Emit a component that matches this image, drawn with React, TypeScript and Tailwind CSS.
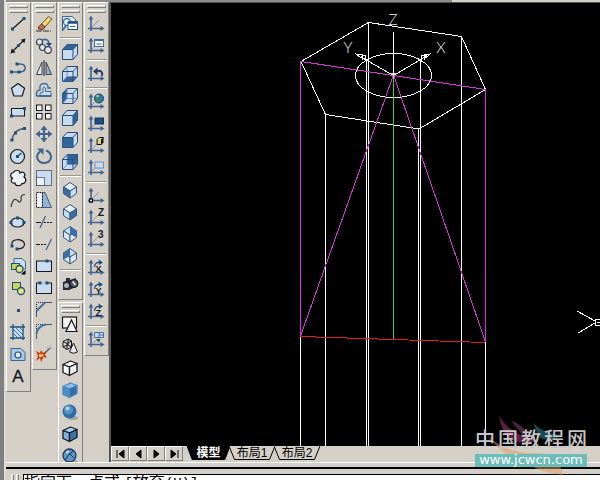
import type { ReactNode } from "react";

type Tool = { name: string; icon: ReactNode } | "sep";

const INK = "#15191f";
const NAVY = "#1d4f7c";
const STEEL = "#41638f";
const PALE = "#c9dcf0";
const MID = "#8fb3d9";
const DEEP = "#3a6ea5";

function Dot({ x, y }: { x: number; y: number }) {
  return <rect x={x - 1.5} y={y - 1.5} width="3" height="3" fill={NAVY} />;
}

function Box({ face }: { face: "top" | "bottom" | "left" | "right" | "front" | "back" }) {
  const faces = {
    top: "M3.5 8.5L8 3.5H18.5L14 8.5Z",
    bottom: "M3.5 18.5L8 13.5H18.5L14 18.5Z",
    left: "M3.5 8.5L8 3.5V13.5L3.5 18.5Z",
    right: "M14 8.5L18.5 3.5V13.5L14 18.5Z",
    front: "M3.5 8.5H14V18.5H3.5Z",
    back: "M8 3.5H18.5V13.5H8Z",
  };
  const solid = face === "front" || face === "right" || face === "top";
  return (
    <g strokeLinejoin="round">
      <path d="M3.5 8.5L8 3.5H18.5V13.5L14 18.5H3.5Z" fill="#c6dbf0" stroke="#2b4d75" />
      <path d={faces[face]} fill="#2f659c" />
      {!solid && <path d="M8 3.5V13.5H18.5M8 13.5L3.5 18.5" stroke="#6f8fb3" />}
      <path d="M3.5 8.5H14V18.5M14 8.5L18.5 3.5" stroke="#2b4d75" />
    </g>
  );
}

function IsoBox({ top, left, right }: { top: string; left: string; right: string }) {
  return (
    <g stroke="#35587f" strokeLinejoin="round">
      <path d="M11 3.5L17.5 8L11 12L4.5 8Z" fill={top} />
      <path d="M4.5 8L11 12V19L4.5 14.5Z" fill={left} />
      <path d="M17.5 8L11 12V19L17.5 14.5Z" fill={right} />
    </g>
  );
}

function Cube({ top, left, right, edge }: { top: string; left: string; right: string; edge: string }) {
  return (
    <g stroke={edge} strokeWidth="1.3" strokeLinejoin="round">
      <path d="M4 7.5L11.5 4L18 6.5L10.5 10Z" fill={top} />
      <path d="M4 7.5L10.5 10V18.5L4 15.5Z" fill={left} />
      <path d="M18 6.5L10.5 10V18.5L18 14.5Z" fill={right} />
    </g>
  );
}

function Axes({ children, plain }: { children?: ReactNode; plain?: boolean }) {
  return (
    <>
      {!plain && <path d="M6 15L14 7" stroke="#8b96a3" />}
      <path d="M6 5V18M3 15.5H17" stroke={STEEL} strokeWidth="1.6" />
      <path d="M6 2.5L8.4 6.5H3.6ZM19.5 15.5L15.5 13.1V17.9Z" fill={STEEL} />
      {children}
    </>
  );
}

function AxisTurn({ letter }: { letter: string }) {
  return (
    <Axes plain>
      <path d="M9.5 10Q10 5 15 5.5" stroke={NAVY} strokeWidth="1.3" />
      <path d="M13.5 2.5L18 5.5L14 8Z" fill={NAVY} />
      <text x="10.5" y="15" fontSize="9" fontWeight="700" fontFamily="Liberation Sans, sans-serif" fill={INK}>
        {letter}
      </text>
    </Axes>
  );
}

function AxisMark({ mark }: { mark: string }) {
  return (
    <Axes>
      <text x="13" y="9" fontSize="10" fontWeight="700" fontFamily="Liberation Sans, sans-serif" fill={INK}>
        {mark}
      </text>
    </Axes>
  );
}

const drawTools: Tool[] = [
  { name: "Line", icon: <><path d="M5.5 16L17 5.5" stroke={INK} strokeWidth="1.2" /><Dot x={5.5} y={16} /><Dot x={17} y={5.5} /></> },
  { name: "Construction line", icon: <><path d="M5 17L17.5 4.5" stroke={INK} strokeWidth="1.3" /><path d="M3.5 18.5L4.7 13.5L8.5 17.3ZM18.5 3.5L13.8 4.7L17.3 8.3Z" fill={INK} /><Dot x={11.5} y={10.5} /></> },
  { name: "Polyline", icon: <><path d="M4.5 15H12C20 15 20 7.5 13 7H10" stroke={STEEL} strokeWidth="1.6" /><Dot x={4.5} y={15} /><Dot x={12} y={15} /><Dot x={10} y={7} /></> },
  { name: "Polygon", icon: <path d="M11 4.5L17.5 9.3L15.2 17H6.8L4.5 9.3Z" fill={PALE} stroke={INK} strokeWidth="1.2" /> },
  { name: "Rectangle", icon: <><rect x="4.5" y="7.5" width="13" height="7.5" fill={PALE} stroke={INK} /><Dot x={4.5} y={15} /><Dot x={17.5} y={7.5} /></> },
  { name: "Arc", icon: <><path d="M5 17Q7 6 18 5.5" stroke="#4d5660" strokeWidth="1.4" /><Dot x={5} y={17} /><Dot x={8.5} y={10} /><Dot x={17.5} y={5.5} /></> },
  { name: "Circle", icon: <><circle cx="10.5" cy="11.5" r="7" fill={PALE} stroke={INK} strokeWidth="1.2" /><path d="M10.5 11.5L14.5 8" stroke={NAVY} strokeWidth="1.5" /><Dot x={10.5} y={11.5} /></> },
  { name: "Revision cloud", icon: <path d="M6 11C3 11 2.5 6 6.5 5.5C7.5 2.5 13 3 13 6C16 3.5 19.5 7 17 10C20 12 19 17 15 16.5C13.5 20 8 19 8 16C4 17 3 12.5 6 11Z" fill="#eef1f4" stroke={INK} strokeWidth="1.2" /> },
  { name: "Spline", icon: <path d="M4 18C6 8 9 10 11 12C13 15 15 11 14 9Q14 5.5 18 5.5" stroke="#343a42" strokeWidth="1.2" /> },
  { name: "Ellipse", icon: <><ellipse cx="10.5" cy="11.5" rx="6.5" ry="4.5" fill={PALE} stroke={INK} strokeWidth="1.2" /><Dot x={4} y={11.5} /><Dot x={17} y={11.5} /><Dot x={10.5} y={7} /></> },
  { name: "Ellipse arc", icon: <><path d="M5 13C2 5 17 5 17.5 11C17.5 15 13 16 10 16" stroke={INK} strokeWidth="1.2" /><Dot x={5} y={13} /><Dot x={10} y={16} /></> },
  { name: "Insert block", icon: <><path d="M7 3.5H15L18.5 7V14H7Z" fill={PALE} stroke={STEEL} /><rect x="4.5" y="8.5" width="8" height="6" fill="#c8d45c" stroke={NAVY} /><circle cx="12.5" cy="14" r="3.5" fill="#e3e673" stroke={NAVY} strokeWidth="1.3" /><path d="M18.5 15V19.5H14Z" fill="#000" /></> },
  { name: "Make block", icon: <><rect x="5.5" y="5.5" width="8" height="7" fill="#c8d45c" stroke={NAVY} /><circle cx="14" cy="14" r="3.5" fill="#e3e673" stroke={NAVY} strokeWidth="1.3" /></> },
  { name: "Point", icon: <Dot x={11.5} y={11.5} /> },
  { name: "Hatch", icon: <><path d="M6 6H16V17H6Z" fill={PALE} /><path d="M6 3V19M3 17H18M16 3V19M3 6H18" stroke={NAVY} strokeWidth="1.3" /><path d="M6 12L11 17M6 8L15 17M8 6L16 14M12 6L16 10" stroke={DEEP} /></> },
  { name: "Region", icon: <><path d="M4 5.5H14L18 9.5V17.5H4Z" fill="#aac8e6" stroke={STEEL} /><circle cx="11" cy="12" r="3" fill="#e9eef4" stroke={NAVY} strokeWidth="1.2" /></> },
  { name: "Text", icon: <text x="11" y="17" textAnchor="middle" fontSize="17" fontFamily="Liberation Sans, sans-serif" fill={INK} stroke={INK} strokeWidth="0.3">A</text> },
];

const modifyTools: Tool[] = [
  { name: "Erase", icon: <><path d="M3 18H18" stroke="#333" strokeDasharray="6 1" /><path d="M8.5 11L15.5 3.5L19 6L12 14Z" fill="#ecd262" stroke="#6b5a22" /><path d="M8.5 11L12 14L10 16.5L5.5 16V14Z" fill="#d0705f" stroke="#5c2b25" /><path d="M10 12L16.5 5" stroke="#fbf0bb" /></> },
  { name: "Copy", icon: <><g fill="#e4e7ea" stroke="#38414c" strokeWidth="1.2"><circle cx="6.5" cy="7" r="3" /><circle cx="9.5" cy="12.5" r="3" /><circle cx="15" cy="15" r="3.3" /></g><path d="M9 5Q15 3 16 8" stroke={DEEP} strokeWidth="1.7" /><path d="M13 8H19L16 11.5Z" fill={NAVY} /></> },
  { name: "Mirror", icon: <><path d="M9 5V17.5H3.5Z" fill="#e4e7ea" stroke="#38414c" /><path d="M13 5V17.5H18.5Z" fill={MID} stroke="#38414c" /><path d="M11 3V19" stroke={INK} /></> },
  { name: "Offset", icon: <><path d="M3.5 17V14Q4 11 7 11Q6 4.5 11 4.5Q15.5 4.5 15 9H18" stroke={DEEP} strokeWidth="1.4" /><path d="M7 17V14.5Q7.500 13.500 10 13.5V9Q11 7 12.5 9V12.5H18V17Z" fill={PALE} stroke={DEEP} /><path d="M3.5 17H18.5" stroke={NAVY} strokeWidth="1.3" /></> },
  { name: "Array", icon: <g fill="#f2f2f2" stroke={INK}><rect x="3.5" y="4" width="5.5" height="5.5" /><rect x="12.5" y="4" width="5.5" height="5.5" /><rect x="3.5" y="12.5" width="5.5" height="5.5" /><rect x="12.5" y="12.5" width="5.5" height="5.5" /></g> },
  { name: "Move", icon: <><path d="M11 5V17M5 11H17" stroke={STEEL} strokeWidth="2.2" /><path d="M11 2.5L14.5 7H7.5ZM11 19.5L14.5 15H7.5ZM2.5 11L7 7.500V14.500ZM19.5 11L15 7.5V14.5Z" fill={STEEL} /></> },
  { name: "Rotate", icon: <><path d="M7 6.5Q3 10 4.5 14Q7 18.5 12 18Q18 17 18 11.5Q17.5 7 13 5.5" stroke={STEEL} strokeWidth="2" /><path d="M4 3.5H10.5V10Z" fill={STEEL} /></> },
  { name: "Scale", icon: <><rect x="3.5" y="3.5" width="15" height="15" fill={PALE} stroke="#5b7290" /><path d="M3.5 10.5H11.5V18.5H3.5Z" fill="#eaf1f8" stroke={INK} strokeDasharray="1 1" /></> },
  { name: "Stretch", icon: <><path d="M9.5 3.5H12L18.5 18.5H9.5Z" fill={MID} stroke="#4c5c70" /><rect x="3.5" y="3.5" width="6" height="15" fill="#f0f2f4" stroke={INK} strokeDasharray="2 1" /></> },
  { name: "Trim", icon: <><path d="M3 11.5H8" stroke={INK} /><path d="M11 11.5H19" stroke={INK} strokeDasharray="2 1" /><path d="M7 17L12.5 5" stroke={STEEL} strokeWidth="1.3" /></> },
  { name: "Extend", icon: <><path d="M3 11.5H7" stroke={INK} /><path d="M8 11.5H14" stroke={INK} strokeDasharray="2 1" /><path d="M13 17L18.5 6" stroke={STEEL} strokeWidth="1.3" /></> },
  { name: "Break at point", icon: <><rect x="3.5" y="6" width="15" height="10.5" fill={PALE} stroke={INK} /><Dot x={14} y={6} /></> },
  { name: "Break", icon: <><rect x="3.5" y="6" width="15" height="10.5" fill={PALE} stroke={INK} /><path d="M7 6H14" stroke={PALE} strokeWidth="1.5" /><Dot x={7} y={6} /><Dot x={14} y={6} /></> },
  { name: "Chamfer", icon: <><path d="M3.5 18V3.5H19" stroke={INK} strokeDasharray="1 1" /><path d="M3.5 18V12M12 3.5H19" stroke="#4d5660" /><path d="M3.5 12L12 3.5" stroke={DEEP} strokeWidth="1.8" /></> },
  { name: "Fillet", icon: <><path d="M3.5 18V3.5H19" stroke={INK} strokeDasharray="1 1" /><path d="M3.5 18V13M13 3.5H19" stroke="#4d5660" /><path d="M3.5 13Q4.5 5 13 3.5" stroke={DEEP} strokeWidth="1.8" /></> },
  { name: "Explode", icon: <><path d="M11 11L17 5" stroke="#5d6b7a" strokeWidth="1.5" /><path d="M17 2V8M14 5H20" stroke="#8c99a6" strokeDasharray="1 1" /><path d="M3 8L7 10L8 7L10 10L13 8L12 12L14 15L10.5 14L8 19L7 15L3 18L5 13Z" fill="#c93a20" /><path d="M6 11H9L11 12L9 14H6Z" fill="#f6c443" /></> },
];

const viewTools: Tool[] = [
  { name: "Named views", icon: <><path d="M3.5 18V3.5H13L17 7V9" fill="#e9f0f8" stroke={STEEL} /><circle cx="8" cy="9" r="3.5" stroke={DEEP} strokeWidth="1.3" /><path d="M4 17L7 12.5" stroke={DEEP} strokeWidth="2" /><rect x="9" y="9" width="9.5" height="7.5" fill="#fff" stroke={NAVY} /><path d="M9 9.5H18.5" stroke={NAVY} strokeWidth="2.5" /><path d="M11 13.5H16.5" stroke={STEEL} /></> },
  "sep",
  { name: "Top view", icon: <Box face="top" /> },
  { name: "Bottom view", icon: <Box face="bottom" /> },
  { name: "Left view", icon: <Box face="left" /> },
  { name: "Right view", icon: <Box face="right" /> },
  { name: "Front view", icon: <Box face="front" /> },
  { name: "Back view", icon: <Box face="back" /> },
  "sep",
  { name: "SW isometric", icon: <IsoBox top="#e5eef8" left={DEEP} right={PALE} /> },
  { name: "SE isometric", icon: <IsoBox top="#e5eef8" left={PALE} right={DEEP} /> },
  { name: "NE isometric", icon: <><IsoBox top={PALE} left="#dce7f3" right="#dce7f3" /><path d="M11 3.5L17.5 8V14.5L11 11Z" fill={DEEP} /></> },
  { name: "NW isometric", icon: <><IsoBox top={PALE} left="#dce7f3" right="#dce7f3" /><path d="M11 3.5L4.5 8V14.5L11 11Z" fill={DEEP} /></> },
  "sep",
  { name: "Camera", icon: <><path d="M4 9L7 8V5H11V7L17 5V14L10 17H4Z" fill="#262b33" /><circle cx="7.5" cy="12.5" r="2.5" fill="#aab2bd" /><circle cx="15" cy="10.5" r="4" fill="#505b6a" stroke="#111" /><path d="M13.5 8.5L16.500 12" stroke="#e8edf2" strokeWidth="1.5" /></> },
];

const shadeTools: Tool[] = [
  { name: "2D wireframe", icon: <g fill="#f2f2f2" stroke={INK} strokeWidth="1.2"><rect x="3.5" y="4" width="14" height="11" /><path d="M12.5 7L18 18.5H7Z" /></g> },
  { name: "3D wireframe", icon: <g stroke={INK}><path d="M4 6.5L9 4L12.5 6V12L8 14.5L4 12ZM4 6.5L8 8.5L12.5 6M8 8.5V14.5M9 4V10L4 12M9 10L12.5 12" /><path d="M14.5 8L18.5 17Q14.5 19.5 10.5 17Z" fill="#e8e8e8" /></g> },
  { name: "Hidden", icon: <Cube top="#fff" left="#fff" right="#eee" edge={INK} /> },
  { name: "Flat shaded", icon: <Cube top="#8fc0ea" left="#4b8fcb" right="#326fa9" edge="#4b86ba" /> },
  { name: "Gouraud shaded", icon: <><ellipse cx="14" cy="17" rx="5" ry="2" fill="#a5a49f" /><circle cx="10.5" cy="10.5" r="7" fill="#2e6ea6" /><circle cx="9.5" cy="9" r="4.5" fill="#5692c5" /><circle cx="8.5" cy="7.5" r="2" fill="#b9d6ef" /></> },
  { name: "Flat shaded, edges on", icon: <Cube top="#a9cdee" left="#7fb0dc" right="#3973aa" edge={INK} /> },
  { name: "Gouraud shaded, edges on", icon: <><ellipse cx="14" cy="17" rx="5" ry="2" fill="#a5a49f" /><circle cx="10.5" cy="10.5" r="6.5" fill="#5c97c9" stroke="#1c3c5e" strokeWidth="1.3" /><path d="M6 6Q11 8 16 14M15 5.5Q9 9 6 15" stroke="#173654" /><circle cx="8.5" cy="7" r="1.5" fill="#d3e5f5" /></> },
];

const ucsTools: Tool[] = [
  { name: "UCS", icon: <Axes /> },
  { name: "Named UCS", icon: <Axes><rect x="9.5" y="4.5" width="9" height="7" fill="#fff" stroke={DEEP} /><path d="M9 5H19" stroke={DEEP} strokeWidth="2" /><path d="M11.5 9H16.5" stroke={STEEL} /></Axes> },
  "sep",
  { name: "Previous UCS", icon: <Axes plain><path d="M17 13Q18.5 7 11.5 8" stroke="#243e66" strokeWidth="2" /><path d="M8 8.5L12.5 4.5V12Z" fill="#243e66" /></Axes> },
  "sep",
  { name: "World UCS", icon: <Axes><circle cx="14" cy="7.5" r="4.5" fill="#2d77b5" stroke="#174262" /><path d="M10.5 6Q13 3 15 5L13 8L15 10L13 12Q10 9 10.5 6Z" fill="#3f8f4a" /><circle cx="12.5" cy="5" r="1" fill="#e0f0ff" /></Axes> },
  { name: "Object UCS", icon: <Axes><rect x="10" y="5" width="8.5" height="6" fill={NAVY} stroke="#12385c" /></Axes> },
  { name: "Face UCS", icon: <Axes><path d="M12 4.5L14 2.5H18.5L16.5 4.5V9.5H12Z" fill="#d9d07a" stroke={INK} /><path d="M16.5 4.5L18.5 2.5V7.5L16.5 9.5Z" fill="#111" /></Axes> },
  { name: "View UCS", icon: <Axes><rect x="10" y="5" width="8.5" height="6" fill={PALE} stroke="#6d93bf" /></Axes> },
  "sep",
  { name: "Origin UCS", icon: <Axes><rect x="4.5" y="14" width="3" height="3" fill="#fff" stroke="#000" strokeWidth="1.2" /></Axes> },
  { name: "Z axis vector UCS", icon: <AxisMark mark="Z" /> },
  { name: "3 point UCS", icon: <AxisMark mark="3" /> },
  "sep",
  { name: "Rotate about X", icon: <AxisTurn letter="X" /> },
  { name: "Rotate about Y", icon: <AxisTurn letter="Y" /> },
  { name: "Rotate about Z", icon: <AxisTurn letter="Z" /> },
  "sep",
  { name: "Apply UCS", icon: <Axes plain><path d="M9.5 3.5H18.5V8.5H9.5ZM14 3.5V8.5M14 6H18.5" fill={PALE} stroke={DEEP} /><path d="M8 14L13 10.5" stroke="#8b96a3" /><path d="M11 10H15.5L14 13.5Z" fill={NAVY} /></Axes> },
];

function Toolbar({ label, tools }: { label: string; tools: Tool[] }) {
  return (
    <div
      role="toolbar"
      aria-label={label}
      aria-orientation="vertical"
      className="w-[25px] shrink-0 border border-t-white border-l-white border-r-[#808080] border-b-[#808080] pb-1"
    >
      <div className="flex h-[10px] flex-col gap-0.5 px-0.5 pt-0.5">
        <div className="h-[3px] border border-t-white border-l-white border-r-[#808080] border-b-[#808080]" />
        <div className="h-[3px] border border-t-white border-l-white border-r-[#808080] border-b-[#808080]" />
      </div>
      {tools.map((tool, i) =>
        tool === "sep" ? (
          <div key={i} className="mx-px h-[6px] pt-0.5">
            <div className="h-0.5 border-t border-b border-t-[#9a968e] border-b-white" />
          </div>
        ) : (
          <button key={tool.name} type="button" aria-label={tool.name} className="block size-[22px]">
            <svg viewBox="0 0 22 22" className="size-[22px]" fill="none">
              {tool.icon}
            </svg>
          </button>
        ),
      )}
    </div>
  );
}

function Drawing() {
  return (
    <svg
      viewBox="111 3 489 443"
      preserveAspectRatio="xMinYMin slice"
      className="block size-full"
      fill="none"
      shapeRendering="crispEdges"
      role="img"
      aria-label="Hexagonal prism wireframe"
    >
      <g stroke="#fff">
        <path d="M301 61.5L368.5 22.5L461.5 36.5L485.5 89.5L419 129L325.5 114.5Z" />
        <path d="M325.5 114V446M366.5 59V446M368.5 22V446M418.5 129V446M420.5 59V446M461.5 36V446M300.5 336V446M485.5 342V446" />
        <ellipse cx="393.5" cy="75.5" rx="38" ry="22" />
        <path d="M393.5 32V75M393.5 75.5L425 57M393.5 75.5L361 57" />
        <path d="M577 311L595 321M578 333L595 323M600 319.5H595.5V325.5H600M597 322.5H600" />
        <path d="M356 54L363 55L361 58ZM362 60L362 55L366 56L365 61M430 54L424 55L426 58ZM421 62L422 55L427 55L424 60" />
      </g>
      <path
        d="M301 61.5L485.5 89.5M300.5 61V336M485.5 89V342M393.5 75L300.5 336M393.5 75L485.5 342"
        stroke="#d633d6"
      />
      <rect x="393" y="77" width="1" height="262" fill="#3fd13f" />
      <path d="M300.5 336.5L485.5 342.5" stroke="#e02020" />
      <path d="M391 73.5H396M393.5 72V77" stroke="#ddd" />
      <g fill="#eee" fontFamily="Lato, sans-serif" fontSize="15" fontWeight="300" textAnchor="middle">
        <text x="393" y="25">Z</text>
        <text x="348" y="53">Y</text>
        <text x="441" y="53">X</text>
      </g>
    </svg>
  );
}

const navButtons = [
  { name: "First tab", d: "M5 3V11M12 3L7 7L12 11Z" },
  { name: "Previous tab", d: "M11 3L6 7L11 11Z" },
  { name: "Next tab", d: "M6 3L11 7L6 11Z" },
  { name: "Last tab", d: "M5 3L10 7L5 11ZM12 3V11" },
];

function LayoutTab({ label, active }: { label: string; active?: boolean }) {
  return (
    <button
      type="button"
      role="tab"
      aria-selected={!!active}
      className={
        active
          ? "relative -mr-px h-[14px] w-[43px] text-[12px] leading-[14px] font-bold text-white"
          : "relative -mr-px h-[14px] w-[46px] text-[12px] leading-[14px] text-black"
      }
    >
      <svg viewBox="0 0 46 14" preserveAspectRatio="none" className="absolute inset-0 size-full">
        <path d="M0 0L5.5 13.5H40.5L46 0" fill={active ? "#000" : "#d4d0c8"} stroke="#000" />
      </svg>
      <span className="relative">{label}</span>
    </button>
  );
}

function Watermark() {
  return (
    <div className="pointer-events-none absolute right-[13px] bottom-[13px] w-[112px]">
      <svg viewBox="0 0 112 62" className="absolute right-0 bottom-[-8px] h-[62px] w-[112px]">
        <path d="M24 2Q34 22 62 27Q46 34 33 24Q26 16 24 2Z" fill="#6b2450" opacity="0.85" />
        <path d="M36 8Q52 12 56 32Q46 20 36 8Z" fill="#7b3b68" opacity="0.6" />
        <path d="M58 10Q70 22 88 22Q74 30 64 24Z" fill="#1f5b68" opacity="0.8" />
        <path d="M12 22Q30 40 60 40Q84 40 88 62Q70 60 58 54Q28 44 12 22Z" fill="#e09a5e" opacity="0.5" />
      </svg>
      <div className="relative flex justify-between text-[20px] leading-[26px] font-medium text-[#c6c6c6]">
        <span>中</span>
        <span>国</span>
        <span>教</span>
        <span>程</span>
        <span>网</span>
      </div>
      <div className="relative mt-px h-[13px] bg-[#6dbdb9] text-center font-['DejaVu_Sans',sans-serif] text-[13px] leading-[12px] text-white">
        www.jcwcn.com
      </div>
    </div>
  );
}

export default function App() {
  return (
    <div className="relative flex h-screen overflow-hidden bg-[#d4d0c8] font-['Liberation_Sans','Noto_Sans_CJK_SC',sans-serif]">
      <div className="w-[6px] shrink-0 border-r-2 border-[#dedbd5] bg-[#808080]" />
      <div className="flex min-w-0 flex-1 flex-col">
        <div className="h-0.5 shrink-0">
          <div className="h-0.5 w-3/4 bg-[#8a8a8a]" />
        </div>
        <div className="flex min-h-0 flex-1 items-stretch overflow-hidden">
          <div className="flex shrink-0 items-start gap-px">
            <Toolbar label="Draw" tools={drawTools} />
            <Toolbar label="Modify" tools={modifyTools} />
            <div className="flex flex-col gap-0.5">
              <Toolbar label="View" tools={viewTools} />
              <Toolbar label="Shade" tools={shadeTools} />
            </div>
            <Toolbar label="UCS" tools={ucsTools} />
          </div>
          <main className="flex min-w-0 flex-1 flex-col border-t border-l-2 border-[#55534f]">
            <div className="min-h-0 flex-1 bg-black">
              <Drawing />
            </div>
            <div className="flex h-[16px] shrink-0 items-start">
              {navButtons.map((b) => (
                <button
                  key={b.name}
                  type="button"
                  aria-label={b.name}
                  className="h-[15px] w-[18px] border border-t-white border-l-white border-r-[#808080] border-b-[#808080]"
                >
                  <svg viewBox="0 0 16 13" className="block h-[13px] w-[16px]">
                    <path d={b.d} fill="#000" stroke="#000" />
                  </svg>
                </button>
              ))}
              <div role="tablist" className="ml-1 flex">
                <LayoutTab label="模型" active />
                <LayoutTab label="布局1" />
                <LayoutTab label="布局2" />
              </div>
            </div>
          </main>
        </div>
        <div className="h-[18px] shrink-0 border-t border-white pt-1">
          <div className="h-0.5 bg-black" />
          <div className="flex pt-[5px]">
            <div className="flex w-[17px] shrink-0 justify-center gap-0.5">
              <div className="h-2 w-[3px] border border-white border-r-[#808080]" />
              <div className="h-2 w-[3px] border border-white border-r-[#808080]" />
            </div>
            <p className="h-[24px] flex-1 border-t border-l border-black bg-white text-[16px] leading-[16px] whitespace-nowrap text-black">
              指定下一点或 <span className="font-['Liberation_Mono',monospace] text-[14px]">[</span>放弃
              <span className="font-['Liberation_Mono',monospace] text-[14px]">(U)]</span>
            </p>
          </div>
        </div>
      </div>
      <Watermark />
    </div>
  );
}
